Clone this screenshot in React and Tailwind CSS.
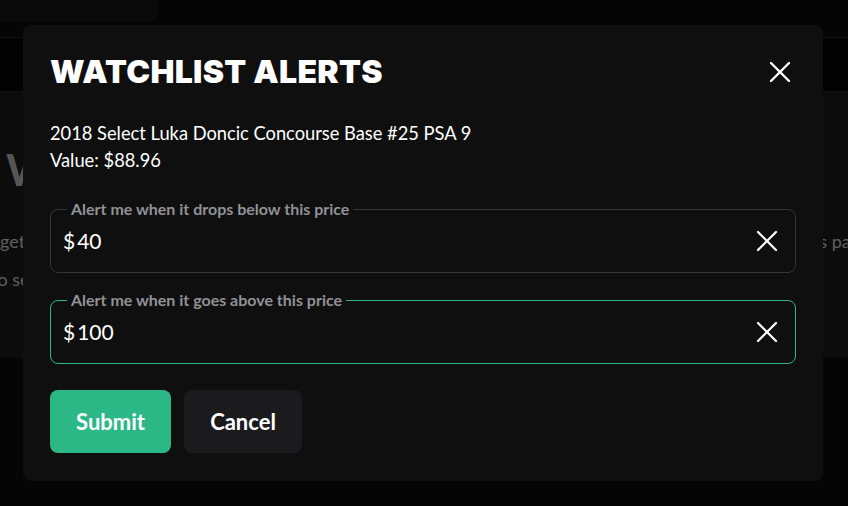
import { X } from "lucide-react"

function PriceField({ label, value, active }) {
  return (
    <div
      className={
        "relative flex h-[64px] items-center justify-between rounded-lg border pl-[12px] pr-[10px] " +
        (active ? "border-[#2bb886]" : "border-[#35353a]")
      }
    >
      {/* outlined label sits over the top border */}
      <span className="absolute -top-[11px] left-[16px] bg-[#0f0f0f] px-[4px] text-[16px] font-bold leading-[20px] text-[#919197]">
        {label}
      </span>
      <div className="flex items-center text-[21px] text-white">
        <span>$</span>
        <span className="ml-[2px]">{value}</span>
      </div>
      <X size={36} strokeWidth={1.5} className="text-white" />
    </div>
  )
}

export default function App() {
  return (
    <div
      className="relative h-[506px] w-[848px] overflow-hidden bg-[#050505]"
      style={{ fontFamily: "Lato, 'Open Sans', sans-serif" }}
    >
      {/* dimmed page behind the dialog */}
      <div className="flex h-[37px] items-start">
        <div className="h-[22px] w-[158px] rounded-br-lg bg-[#0a0a0a]"></div>
      </div>
      <div className="h-[55px] border-y border-[#101010] bg-[#020202]"></div>
      <div className="h-[266px] bg-[#0c0c0c] pt-[51px]">
        <div className="pl-[6px] text-[44px] font-bold leading-[52px] text-[#555555]">Watchlist</div>
        <div className="mt-[27px] text-[18px] leading-[38px] text-[#606060]">
          <p className="-mr-[17px] flex justify-between">
            <span>get alerts when a card's price changes</span>
            <span>your target price moves above or below its past</span>
          </p>
          <p className="-ml-[9px]">to see what cards are on your watchlist.</p>
        </div>
      </div>

      {/* dialog */}
      <div className="absolute inset-0 flex items-start pl-[23px] pt-[25px]">
        <div className="w-[800px] rounded-lg bg-[#0f0f0f] px-[27px] pb-[28px] pt-[29px]">
          <div className="flex h-[36px] items-center justify-between">
            <h2
              className="text-[32px] font-black leading-[36px] tracking-[0.3px] text-white"
              style={{ fontFamily: "Inter, sans-serif" }}
            >
              WATCHLIST ALERTS
            </h2>
            <X size={36} strokeWidth={1.6} className="-mr-[2px] text-white" />
          </div>

          <div className="mt-[30px] text-[18.3px] leading-[27px] text-white">
            <p>2018 Select Luka Doncic Concourse Base #25 PSA 9</p>
            <p>Value: $88.96</p>
          </div>

          <div className="mt-[35px] flex flex-col gap-[27px]">
            <PriceField label="Alert me when it drops below this price" value="40" />
            <PriceField label="Alert me when it goes above this price" value="100" active />
          </div>

          <div className="mt-[26px] flex gap-[13px]">
            <button className="h-[63px] w-[121px] rounded-lg bg-[#2bb886] text-[22px] font-bold text-white">
              Submit
            </button>
            <button className="h-[63px] w-[118px] rounded-lg bg-[#1b1b1e] text-[22px] font-bold text-white">
              Cancel
            </button>
          </div>
        </div>
      </div>
    </div>
  )
}
